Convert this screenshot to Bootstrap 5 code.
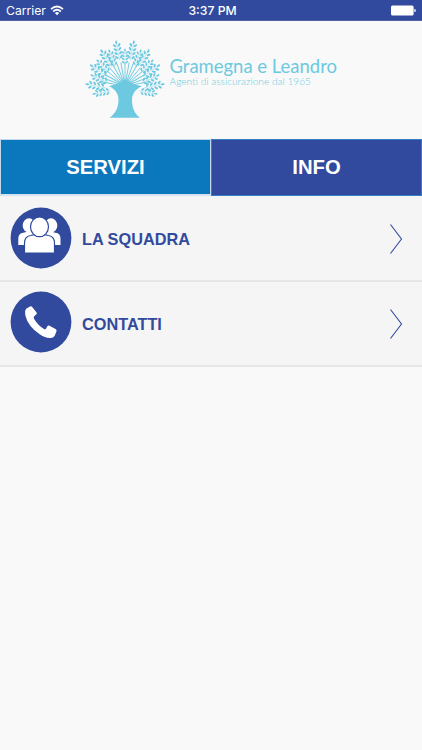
<!DOCTYPE html>
<html lang="it">
<head>
<meta charset="utf-8">
<meta name="viewport" content="width=device-width, initial-scale=1">
<title>Gramegna e Leandro</title>
<link href="https://cdn.jsdelivr.net/npm/bootstrap@5.3.0/dist/css/bootstrap.min.css" rel="stylesheet">
<style>
:root{--navy:#314a9e;--sky:#6cc9e0}
body{background:#f9f9f9;font-family:"Liberation Sans",Arial,sans-serif;min-height:750px}
.status{height:21px;background:var(--navy);font:12.2px Inter,Roboto,sans-serif;padding:1px 6px 0 6px;border-bottom:1px solid #5263a2}
.status .side{flex:1 1 0}
.clock{font-weight:500;padding-left:3px}
.brand{height:118px}
.tabs .btn{height:57px;border-radius:0;font-size:20.3px;font-weight:700;color:#fff;padding:0}
.tabs .services{background:#0b77bc;border:1px solid #c3d9eb;border-bottom:2px solid #d4e4f1}
.tabs .info{background:var(--navy);border:1px solid #347fc4}
.rows{--bs-list-group-border-radius:0}
.rows .list-group-item{height:85px;background:#f5f5f5;border:0;border-bottom:2px solid #e6e6e6;padding:0 19px 2px 10px;color:var(--navy);font-weight:700;font-size:16.3px}
.rows .first{height:86px}
.rows .first .disc{margin-top:2px}
.rows .second .disc{margin-bottom:1px}
.rows span{margin-left:10px;padding-top:4px}
.rows .chevron{margin-top:2px}
.rows .first .chevron{margin-top:4px}
</style>
<script src="https://cdn.jsdelivr.net/npm/bootstrap@5.3.0/dist/js/bootstrap.bundle.min.js"></script>
</head>
<body>
<header class="status d-flex align-items-center text-white">
  <div class="side d-flex align-items-center gap-1"><span>Carrier</span>
    <svg width="14" height="11" viewBox="0 0 14 11" fill="none" stroke="#fff" stroke-width="1.7"><path d="M1 4.2Q7-1.2 13 4.2M3.2 6.5Q7 3 10.8 6.5"/><path d="M4.9 8Q7 6.1 9.1 8L7 10.3Z" fill="#fff" stroke="none"/></svg>
  </div>
  <span class="clock">3:37 PM</span>
  <div class="side d-flex justify-content-end"><svg width="25" height="11" viewBox="0 0 25 11" fill="#fff"><rect y=".5" width="22.6" height="10" rx="1.5"/><path d="M23.4 3.8q1.4.2 1.4 1.7t-1.4 1.7Z"/></svg></div>
</header>
<div class="brand">
  <svg class="d-block" width="422" height="117" viewBox="0 21 422 117">
    <defs><g id="sprig" fill="#6cc9e0">
      <path d="M0 0V20" stroke="#6cc9e0" stroke-width=".4"/>
      <ellipse cx="0" cy="1.300" rx="1" ry="1.900"/>
      <g id="leafpair"><ellipse cx="-2.300" cy="4.400" rx="1.050" ry="2" transform="rotate(-42 -2.300 4.400)"/><ellipse cx="2.300" cy="4.400" rx="1.050" ry="2" transform="rotate(42 2.300 4.400)"/></g>
      <use href="#leafpair" y="4"/><use href="#leafpair" y="8"/><use href="#leafpair" y="12"/>
    </g></defs>
    <g id="crown"></g>
    <path fill="#6cc9e0" d="M109 86Q116 85 125 79Q134 85 142 86C134 90 132 95 132 100C132 107 134 113 140 117.700H109.500C116 113 118.500 107 118.500 100C118.500 94 116 90 109 86Z"/>
    <g fill="#6cc9e0" font-family="Lato, sans-serif">
      <text x="169.500" y="72.500" font-size="18.600" textLength="167.500" lengthAdjust="spacingAndGlyphs">Gramegna e Leandro</text>
      <text x="169.500" y="85" font-size="10.300" font-weight="300" textLength="141.500" lengthAdjust="spacingAndGlyphs">Agenti di assicurazione dal 1965</text>
    </g>
  </svg>
</div>
<nav class="tabs d-flex">
  <button class="btn services w-50">SERVIZI</button>
  <button class="btn info w-50">INFO</button>
</nav>
<main class="list-group rows">
  <a class="list-group-item first d-flex align-items-center" href="#">
    <svg class="disc" width="62" height="62" viewBox="0 0 62 62"><circle cx="31" cy="31" r="30.400" fill="#314a9e"/>
      <g fill="#fff"><ellipse cx="19" cy="18.500" rx="6.300" ry="7.200"/><ellipse cx="41" cy="18.500" rx="6.300" ry="7.200"/><path d="M8.300 38V31.500q0-5 5-5.700l4-1h8v13.200ZM50.500 38V31.500q0-5-5-5.700l-4-1h-8v13.200Z"/></g>
      <path d="M14.500 46V36q0-6.500 6-7.500l4-.8q5 3 10 0l4 .8q6 1 6 7.500v10Z" fill="#fff" stroke="#314a9e" stroke-width="1.200"/>
      <ellipse cx="29.500" cy="19.800" rx="9" ry="9.900" fill="#fff" stroke="#314a9e" stroke-width="1.200"/></svg>
    <span>LA SQUADRA</span>
    <svg class="chevron ms-auto" width="14" height="32" viewBox="0 0 14 32" fill="none" stroke="#314a9e" stroke-width="1.100"><path d="M1.500 1.500L12.500 16L1.500 30.500"/></svg>
  </a>
  <a class="list-group-item second d-flex align-items-center" href="#">
    <svg class="disc" width="62" height="62" viewBox="0 0 62 62"><circle cx="31" cy="31" r="30.400" fill="#314a9e"/>
      <path fill="#fff" d="M16.500 17.500L20 15.400Q21.400 14.700 22.200 16L26.600 21.500Q27.300 22.600 26.200 23.500L24 25.600Q23.400 26.600 24.200 28Q28 34.500 34 38Q35.200 38.600 36 37.700L37.200 35.500Q38 34.200 39.500 34.700L45.500 38Q47 38.800 46.500 40.200L44.800 44.500Q44 46.200 42 46.700Q36.500 48 30 43.500Q18 35.500 15.500 25Q14.200 19.500 16.500 17.500Z"/></svg>
    <span>CONTATTI</span>
    <svg class="chevron ms-auto" width="14" height="32" viewBox="0 0 14 32" fill="none" stroke="#314a9e" stroke-width="1.100"><path d="M1.500 1.500L12.500 16L1.500 30.500"/></svg>
  </a>
</main>
<script>
// Fan of stems topped by leafy sprigs, mirrored about the trunk.
const cx = 125, cy = 86;
let parts = '';
for (let i = 0; i < 17; i++) {
  const a = -80 + i * 10;
  parts += `<path transform="rotate(${a} ${cx} ${cy})" d="M${cx} ${cy}V62" stroke="#6cc9e0" stroke-width=".9"/>`;
}
// Each entry: tip x, tip y, lean from the vertical, scale.
const sprigs = [[125, 49, 0, .8], [116, 41, 11, 1], [109, 50, 20, .9], [101, 50, 33, 1],
  [97, 60, 43, .9], [90.5, 65, 55, 1], [91, 75, 66, .95], [86, 84, 79, 1], [93, 94, 100, .9]];
for (const [x, y, lean, s] of sprigs) {
  parts += `<use href="#sprig" transform="translate(${x} ${y}) rotate(${-lean}) scale(${s})"/>`;
  if (x !== cx) parts += `<use href="#sprig" transform="translate(${2 * cx - x} ${y}) rotate(${lean}) scale(${s})"/>`;
}
document.getElementById('crown').innerHTML = parts;
</script>
</body>
</html>
